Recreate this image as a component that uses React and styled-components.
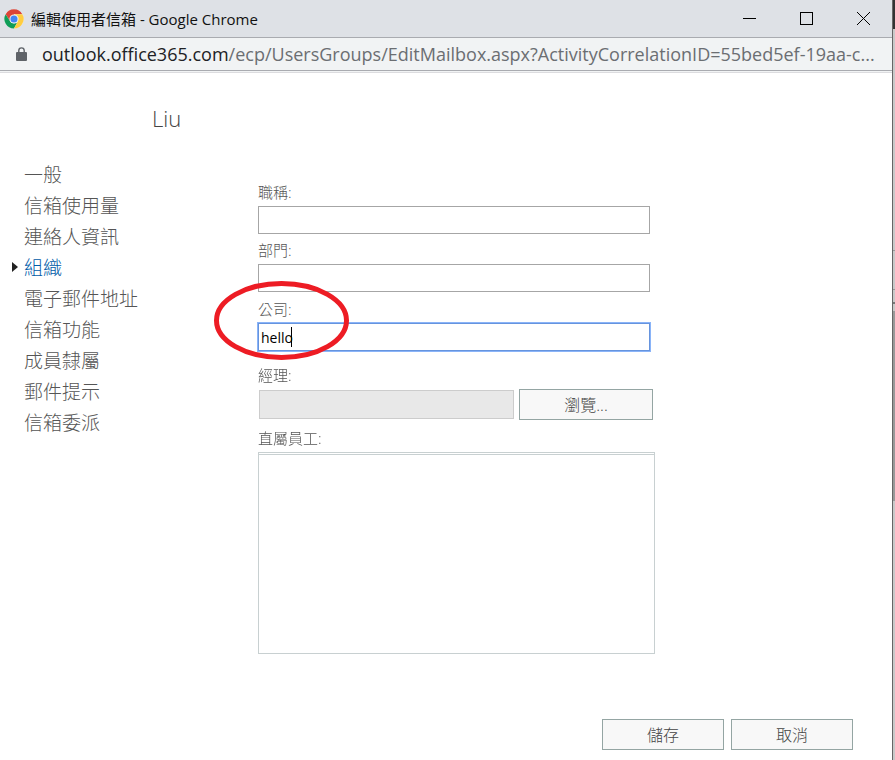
import React, { useState } from "react";
import styled, { createGlobalStyle } from "styled-components";

const GlobalStyle = createGlobalStyle`
  *,
  *::before {
    box-sizing: border-box;
  }
  body {
    margin: 0;
    background: #fff;
    color: #555;
    font-family: "Open Sans", "Noto Sans CJK TC", sans-serif;
    font-weight: 300;
  }
  button,
  input {
    font: inherit;
  }
`;

const Desktop = styled.div`
  display: flex;
  min-height: 100vh;
`;

const Window = styled.div`
  flex: 1;
  min-width: 0;
  display: flex;
  flex-direction: column;
`;

const TitleBar = styled.header`
  display: flex;
  align-items: center;
  height: 38px;
  padding-left: 4px;
  background: #dee1e6;
  border-bottom: 1px solid #a9abb0;
`;

const WindowTitle = styled.h1`
  flex: 1;
  margin: 0 0 0 7px;
  color: #111;
  font-size: 15px;
  font-weight: 400;
  line-height: 20px;
`;

const WindowButton = styled.button`
  display: flex;
  align-items: center;
  justify-content: center;
  width: 57px;
  height: 37px;
  padding: 0;
  border: 0;
  background: none;
  color: #000;
`;

const AddressBar = styled.div`
  display: flex;
  align-items: center;
  height: 35px;
  padding: 0 16px 2px 16px;
  background: #f1f3f4;
  border-bottom: 1px solid #dcdcdf;
  box-shadow: inset 0 -1px 0 #f1f3f4, inset 0 -2px 0 #a9abb0;
`;

const Url = styled.span`
  flex: 1;
  min-width: 0;
  margin-left: 15px;
  overflow: hidden;
  white-space: nowrap;
  text-overflow: ellipsis;
  color: #6b6e72;
  font-size: 18px;
  font-weight: 400;
  line-height: 28px;
`;

const Host = styled.span`
  color: #202124;
`;

const UserName = styled.h2`
  margin: 29px 0 0 152px;
  color: #444;
  font-size: 22px;
  font-weight: 300;
  line-height: 32px;
`;

const Body = styled.main`
  display: flex;
  align-items: flex-start;
  padding-right: 24px;
`;

const Nav = styled.nav`
  display: flex;
  flex-direction: column;
  width: 258px;
  flex-shrink: 0;
  padding: 24px 0 0 12px;
`;

const NavLink = styled.a`
  display: flex;
  align-items: center;
  height: 31px;
  color: ${(props) => (props.$active ? "#005ba8" : "#555")};
  font-size: 19px;
  text-decoration: none;

  &::before {
    content: "";
    width: 6px;
    margin-right: 6px;
    border: 5px solid transparent;
    border-right: 0;
    border-left: 6px solid ${(props) => (props.$active ? "#222" : "transparent")};
  }
`;

const Form = styled.form`
  flex: 1;
  max-width: 397px;
  padding-top: 48px;
`;

const Field = styled.div`
  position: relative;
  display: flex;
  flex-direction: column;
  gap: 4px;
  margin-bottom: ${(props) => props.$space || 6}px;
`;

const Label = styled.label`
  font-size: 15px;
  line-height: 20px;
`;

const TextInput = styled.input`
  height: 28px;
  margin-right: 5px;
  padding: 0 2px;
  border: 1px solid #a6a6a6;
  border-radius: 0;
  background: #fff;
  color: #000;
  font-size: 14px;
  font-weight: 400;

  &:focus {
    border-color: #6694de;
    outline: 1px solid #8ab4f8;
    caret-color: transparent;
  }
`;

const Caret = styled.span`
  position: absolute;
  left: 33px;
  bottom: 4px;
  width: 1px;
  height: 20px;
  background: #000;
`;

const Marker = styled.svg`
  position: absolute;
  left: -44px;
  top: -18px;
  pointer-events: none;
`;

const PickerRow = styled.div`
  display: flex;
  align-items: center;
  gap: 5px;
  padding: 0 2px 0 1px;
`;

const PickerInput = styled.input`
  flex: 1;
  min-width: 0;
  height: 29px;
  padding: 0 2px;
  border: 1px solid #ccc;
  background: #e8e8e8;
`;

const Button = styled.button`
  width: ${(props) => props.$width || 122}px;
  height: 31px;
  padding: 0;
  border: 1px solid #94a5a3;
  border-radius: 0;
  background: #f8f8f8;
  color: #444;
  font-size: 16px;
  line-height: 24px;
`;

const ReportList = styled.ul`
  height: 202px;
  margin: 0;
  padding: 0;
  border: 1px solid #c8d0d1;
  list-style: none;

  &::before {
    content: "";
    display: block;
    height: 2px;
    border-bottom: 1px solid #c8d0d1;
  }
`;

const Footer = styled.footer`
  display: flex;
  justify-content: flex-end;
  gap: 7px;
  margin-top: auto;
  padding: 10px 39px 10px 0;
`;

// sliver of the window behind, seen past the right edge
const Behind = styled.div`
  display: flex;
  flex-direction: column;
  width: 3px;
  border-left: 1px solid #666;
  background: #c9c9c9;
`;

const Piece = styled.div`
  height: ${(props) => props.$height}px;
  background: ${(props) => props.$color || "transparent"};
`;

const sections = [
  "一般",
  "信箱使用量",
  "連絡人資訊",
  "組織",
  "電子郵件地址",
  "信箱功能",
  "成員隸屬",
  "郵件提示",
  "信箱委派",
];

const ChromeLogo = () => (
  <svg width="20" height="20" viewBox="0 0 48 48" aria-hidden="true">
    <circle cx="24" cy="24" r="23" fill="#fff" />
    <path d="M24 24 14.5 29.5 4 12.5A23 23 0 0 1 44 12.5H24z" fill="#db4437" />
    <path d="M4 12.5 14.5 29.5 24 35 33.5 29.5 24 47A23 23 0 0 1 4 12.5z" fill="#0f9d58" />
    <path d="M44 12.5A23 23 0 0 1 24 47L33.5 29.5 34 20 24 12.5z" fill="#ffcd40" />
    <circle cx="24" cy="24" r="11" fill="#f1f1f1" />
    <circle cx="24" cy="24" r="8.5" fill="#4285f4" />
  </svg>
);

const LockIcon = () => (
  <svg width="11" height="14" viewBox="0 0 11 14" aria-hidden="true">
    <path d="M2.8 6V3.6a2.7 2.7 0 0 1 5.4 0V6" fill="none" stroke="#5f6368" strokeWidth="1.4" />
    <rect y="5" width="11" height="9" rx="1" fill="#5f6368" />
  </svg>
);

const App = () => {
  const [active, setActive] = useState("組織");
  const [title, setTitle] = useState("");
  const [department, setDepartment] = useState("");
  const [company, setCompany] = useState("hello");

  return (
    <>
      <GlobalStyle />
      <Desktop>
        <Window>
          <TitleBar>
            <ChromeLogo />
            <WindowTitle>編輯使用者信箱 - Google Chrome</WindowTitle>
            <WindowButton aria-label="最小化">
              <svg width="13" height="13" shapeRendering="crispEdges">
                <path d="M0 6.5H13" stroke="currentColor" />
              </svg>
            </WindowButton>
            <WindowButton aria-label="最大化">
              <svg width="13" height="13" shapeRendering="crispEdges">
                <rect x="0.5" y="0.5" width="12" height="12" fill="none" stroke="currentColor" />
              </svg>
            </WindowButton>
            <WindowButton aria-label="關閉">
              <svg width="13" height="13">
                <path d="M0 0 13 13M13 0 0 13" stroke="currentColor" />
              </svg>
            </WindowButton>
          </TitleBar>
          <AddressBar>
            <LockIcon />
            <Url>
              <Host>outlook.office365.com</Host>
              /ecp/UsersGroups/EditMailbox.aspx?ActivityCorrelationID=55bed5ef-19aa-c...
            </Url>
          </AddressBar>

          <UserName>Liu</UserName>
          <Body>
            <Nav>
              {sections.map((name) => (
                <NavLink
                  key={name}
                  href="#"
                  $active={name === active}
                  onClick={() => setActive(name)}
                >
                  {name}
                </NavLink>
              ))}
            </Nav>
            <Form id="organization" onSubmit={(e) => e.preventDefault()}>
              <Field>
                <Label htmlFor="title">職稱:</Label>
                <TextInput
                  id="title"
                  value={title}
                  onChange={(e) => setTitle(e.target.value)}
                />
              </Field>
              <Field $space={7}>
                <Label htmlFor="department">部門:</Label>
                <TextInput
                  id="department"
                  value={department}
                  onChange={(e) => setDepartment(e.target.value)}
                />
              </Field>
              <Field $space={14}>
                <Label htmlFor="company">公司:</Label>
                <TextInput
                  id="company"
                  autoFocus
                  value={company}
                  onChange={(e) => setCompany(e.target.value)}
                />
                <Caret />
                <Marker width="135" height="79" aria-hidden="true">
                  <ellipse
                    cx="67.5"
                    cy="39.5"
                    rx="65"
                    ry="37"
                    fill="none"
                    stroke="#ed1c24"
                    strokeWidth="5"
                  />
                </Marker>
              </Field>
              <Field $space={8}>
                <Label htmlFor="manager">經理:</Label>
                <PickerRow>
                  <PickerInput id="manager" disabled />
                  <Button type="button" $width={134}>
                    瀏覽...
                  </Button>
                </PickerRow>
              </Field>
              <Field>
                <Label as="span" id="reports">
                  直屬員工:
                </Label>
                <ReportList aria-labelledby="reports" />
              </Field>
            </Form>
          </Body>
          <Footer>
            <Button type="submit" form="organization">
              儲存
            </Button>
            <Button type="button">取消</Button>
          </Footer>
        </Window>
        <Behind>
          <Piece $height={29} $color="#333" />
          <Piece $height={221} />
          <Piece $height={1} $color="#999" />
          <Piece $height={38} />
          <Piece $height={1} $color="#999" />
          <Piece $height={12} />
          <Piece $height={2} $color="#777" />
          <Piece $height={7} />
          <Piece $height={190} $color="#999" />
        </Behind>
      </Desktop>
    </>
  );
};

export default App;
